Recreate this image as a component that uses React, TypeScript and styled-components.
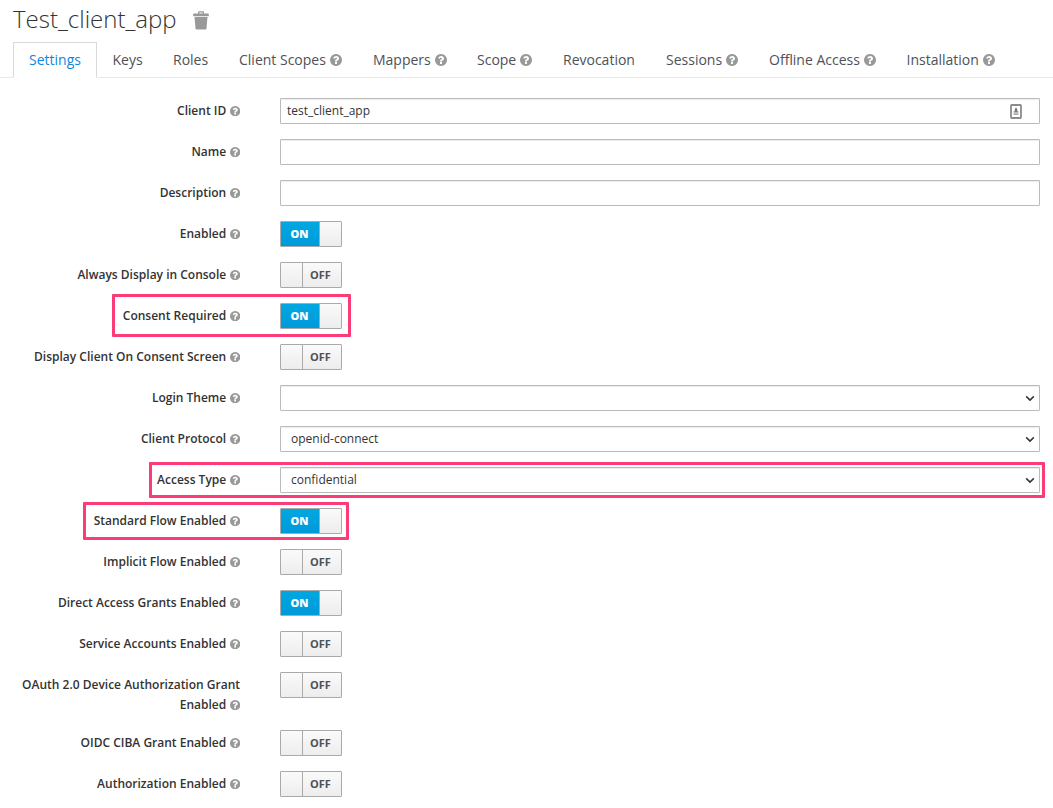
import React from 'react';
import styled, { createGlobalStyle } from 'styled-components';

const GlobalStyle = createGlobalStyle`
  * { box-sizing: border-box; }
  body {
    margin: 0;
    background: #fff;
    color: #333;
    font: 12px/20px 'Open Sans', 'Liberation Sans', sans-serif;
  }
`;

const Page = styled.main`
  height: 808px;
  overflow: hidden;
`;

const Header = styled.header`
  display: flex;
  align-items: flex-start;
  gap: 16px;
  height: 42px;
  padding: 0 0 0 13px;

  svg {
    margin-top: 11px;
  }
`;

const Title = styled.h1`
  margin: 0;
  font-size: 24px;
  line-height: 38px;
  font-weight: 300;
`;

const TabBar = styled.nav`
  display: flex;
  height: 36px;
  padding-left: 13px;
  border-bottom: 1px solid #e9e9e9;
`;

const Tab = styled.a<{ $active?: boolean; $width: number }>`
  display: flex;
  align-items: center;
  gap: 4px;
  flex: none;
  width: ${(p) => p.$width}px;
  height: 36px;
  padding: 0 0 0 15px;
  border: 1px solid ${(p) => (p.$active ? '#d9d9d9' : 'transparent')};
  border-bottom-color: ${(p) => (p.$active ? '#fff' : 'transparent')};
  color: ${(p) => (p.$active ? '#0f86dc' : '#4d5258')};
  font-size: 14px;
  white-space: nowrap;
`;

const HelpSvg = styled.svg<{ $size: number }>`
  flex: none;
  width: ${(p) => p.$size}px;
  height: ${(p) => p.$size}px;
  fill: #999;
`;

const Form = styled.form`
  display: flex;
  flex-direction: column;
  gap: 15px;
  padding: 20px 13px 0 0;
`;

const Row = styled.div`
  position: relative;
  display: grid;
  grid-template-columns: 240px 1fr;
  column-gap: 40px;
  align-items: start;
  min-height: 26px;
`;

const Label = styled.label`
  padding-top: 3px;
  text-align: right;
  font-weight: 600;

  ${HelpSvg} {
    margin-left: 3.500px;
    vertical-align: -1px;
  }
`;

const Field = styled.div`
  display: flex;
  align-items: center;
  justify-content: space-between;
  height: 26px;
  padding: 0 17px 1px 6px;
  border: 1px solid #bbb;
  border-radius: 1px;
  background: #fff;
  box-shadow: inset 0 1px 1px rgba(0, 0, 0, 0.075);

  svg {
    position: relative;
    top: 0.5px;
  }
`;

const SelectField = styled(Field)`
  padding: 0 4px 1px 10px;

  svg {
    top: 1px;
  }
`;

const Highlight = styled.div<{ $left: number; $width: number; $top: number; $height: number }>`
  position: absolute;
  left: ${(p) => p.$left}px;
  top: ${(p) => p.$top}px;
  width: ${(p) => p.$width}px;
  height: ${(p) => p.$height}px;
  border: 3px solid #fb3c76;
  border-radius: 1px;
  pointer-events: none;
`;

const Switch = styled.div<{ $on: boolean }>`
  display: flex;
  flex-direction: ${(p) => (p.$on ? 'row' : 'row-reverse')};
  width: 62px;
  height: 26px;
  border: 1px solid #aaa;
  border-radius: 1px;
  overflow: hidden;
`;

const SwitchText = styled.span<{ $on: boolean }>`
  flex: 1;
  padding-right: ${(p) => (p.$on ? 1 : 3)}px;
  text-align: center;
  font-size: 11px;
  line-height: 23px;
  font-weight: ${(p) => (p.$on ? 800 : 700)};
  color: ${(p) => (p.$on ? '#fff' : '#4d5258')};
  background: ${(p) => (p.$on ? 'linear-gradient(#00a8e1, #0099da)' : 'linear-gradient(#fafafa, #ededed)')};
`;

const SwitchHandle = styled.span<{ $on: boolean }>`
  width: 22px;
  border: 0 solid #aaa;
  border-width: ${(p) => (p.$on ? '0 0 0 1px' : '0 1px 0 0')};
  background: linear-gradient(#fafafa, #ededed);
`;

const Help = ({ size }: { size: number }) => (
  <HelpSvg $size={size} viewBox="128 128 1536 1536">
    <path d="M1024 1376v-192q0-14-9-23t-23-9h-192q-14 0-23 9t-9 23v192q0 14 9 23t23 9h192q14 0 23-9t9-23zm256-672q0-88-55.5-163t-138.5-116-170-41q-243 0-371 213-15 24 8 42l132 100q7 6 19 6 16 0 25-12 53-68 86-92 34-24 86-24 48 0 85.5 26t37.5 59q0 38-20 61t-68 45q-63 28-115.5 86.5t-52.5 125.500v36q0 14 9 23t23 9h192q14 0 23-9t9-23q0-19 21.5-49.5t54.5-49.5q32-18 49-28.5t46-35 44.5-48 28-60.5 12.5-81zm384 192q0 209-103 385.5t-279.5 279.5-385.5 103-385.5-103-279.5-279.5-103-385.5 103-385.5 279.5-279.5 385.5-103 385.5 103 279.5 279.5 103 385.5z" />
  </HelpSvg>
);

const Trash = () => (
  <svg width="16" height="19" viewBox="0 0 16 19" fill="#999">
    <path fillRule="evenodd" d="M5 2.6V1.2C5 .6 5.4.2 6 .2h4c.6 0 1 .4 1 1v1.4h4.3c.3 0 .5.2.5.5v2.1H.2V3.1c0-.3.2-.5.5-.5zM6.3 2.6h3.4V1.4H6.3z" />
    <path d="M1.5 6h13l-1 11.5c-.1.7-.5 1.1-1.2 1.1H3.7c-.7 0-1.1-.4-1.2-1.1z" />
  </svg>
);

const AutofillIcon = () => (
  <svg width="12" height="15" viewBox="0 0 12 15">
    <rect x="1" y="1" width="10" height="13" rx="0.8" fill="#fff" stroke="#8c8c8c" strokeWidth="1.8" />
    <path d="M6 3.3L7.3 5.5V7.6H8.5V8.6H3.500V7.6H4.7V5.5z" fill="#777" />
    <path d="M3.5 9.3h5v1.7h-5z" fill="#aaa" />
  </svg>
);

const Chevron = () => (
  <svg width="10" height="7" viewBox="0 0 10 7" fill="none" stroke="#333" strokeWidth="1.5">
    <path d="M1.2 1.4l3.8 3.700 3.800-3.700" />
  </svg>
);

const tabs: { name: string; width: number; help?: boolean }[] = [
  { name: 'Settings', width: 83.5 },
  { name: 'Keys', width: 60.5 },
  { name: 'Roles', width: 66 },
  { name: 'Client Scopes', width: 134, help: true },
  { name: 'Mappers', width: 104, help: true },
  { name: 'Scope', width: 86, help: true },
  { name: 'Revocation', width: 103 },
  { name: 'Sessions', width: 103, help: true },
  { name: 'Offline Access', width: 137.5, help: true },
  { name: 'Installation', width: 120, help: true },
];

type Mark = { left: number; width: number; top: number; height: number };
type RowData = {
  label: string;
  kind: 'input' | 'select' | 'switch';
  value?: string;
  on?: boolean;
  autofill?: boolean;
  mark?: Mark;
};

const rows: RowData[] = [
  { label: 'Client ID', kind: 'input', value: 'test_client_app', autofill: true },
  { label: 'Name', kind: 'input' },
  { label: 'Description', kind: 'input' },
  { label: 'Enabled', kind: 'switch', on: true },
  { label: 'Always Display in Console', kind: 'switch' },
  { label: 'Consent Required', kind: 'switch', on: true, mark: { left: 112, width: 239, top: -9, height: 43 } },
  { label: 'Display Client On Consent Screen', kind: 'switch' },
  { label: 'Login Theme', kind: 'select' },
  { label: 'Client Protocol', kind: 'select', value: 'openid-connect' },
  { label: 'Access Type', kind: 'select', value: 'confidential', mark: { left: 149, width: 896, top: -5, height: 36 } },
  { label: 'Standard Flow Enabled', kind: 'switch', on: true, mark: { left: 83, width: 266, top: -6, height: 38 } },
  { label: 'Implicit Flow Enabled', kind: 'switch' },
  { label: 'Direct Access Grants Enabled', kind: 'switch', on: true },
  { label: 'Service Accounts Enabled', kind: 'switch' },
  { label: 'OAuth 2.0 Device Authorization Grant Enabled', kind: 'switch' },
  { label: 'OIDC CIBA Grant Enabled', kind: 'switch' },
  { label: 'Authorization Enabled', kind: 'switch' },
];

const Control = ({ row }: { row: RowData }) => {
  if (row.kind === 'switch') {
    const on = !!row.on;
    return (
      <Switch $on={on}>
        <SwitchText $on={on}>{on ? 'ON' : 'OFF'}</SwitchText>
        <SwitchHandle $on={on} />
      </Switch>
    );
  }
  if (row.kind === 'select') {
    return (
      <SelectField>
        <span>{row.value}</span>
        <Chevron />
      </SelectField>
    );
  }
  return (
    <Field>
      <span>{row.value}</span>
      {row.autofill && <AutofillIcon />}
    </Field>
  );
};

export default function App() {
  return (
    <Page>
      <GlobalStyle />
      <Header>
        <Title>Test_client_app</Title>
        <Trash />
      </Header>
      <TabBar>
        {tabs.map((tab, i) => (
          <Tab key={tab.name} $active={i === 0} $width={tab.width}>
            <span>{tab.name}</span>
            {tab.help && <Help size={12} />}
          </Tab>
        ))}
      </TabBar>
      <Form>
        {rows.map((row) => (
          <Row key={row.label}>
            <Label>
              {row.label}
              <Help size={10.3} />
            </Label>
            <Control row={row} />
            {row.mark && (
              <Highlight
                $left={row.mark.left}
                $width={row.mark.width}
                $top={row.mark.top}
                $height={row.mark.height}
              />
            )}
          </Row>
        ))}
      </Form>
    </Page>
  );
}
